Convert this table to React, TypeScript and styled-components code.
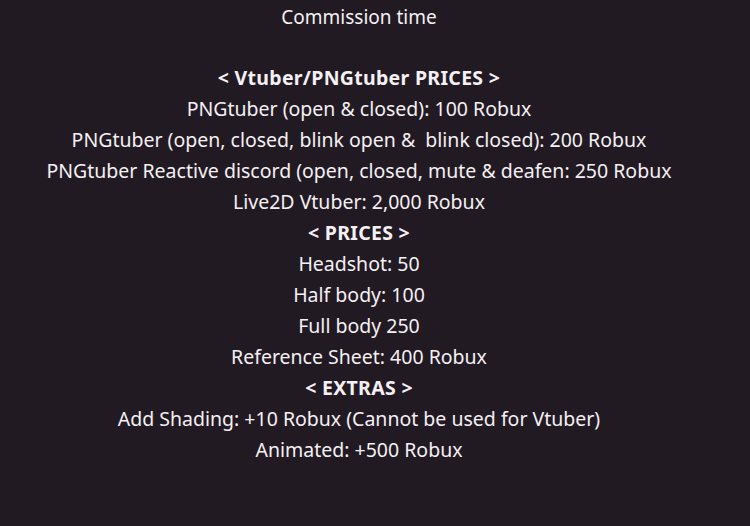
import React, { FC } from 'react';
import styled, { createGlobalStyle } from 'styled-components';

const GlobalStyle = createGlobalStyle`
    html, body {
        margin: 0;
        padding: 0;
        background: #221a22;
    }
`;

type Line = { text: string; heading?: boolean };

const sections: Line[][] = [
    [
        { text: '< Vtuber/PNGtuber PRICES >', heading: true },
        { text: 'PNGtuber (open & closed): 100 Robux' },
        { text: 'PNGtuber (open, closed, blink open &\u00a0 blink closed): 200 Robux' },
        { text: 'PNGtuber Reactive discord (open, closed, mute & deafen: 250 Robux' },
        { text: 'Live2D Vtuber: 2,000 Robux' },
    ],
    [
        { text: '< PRICES >', heading: true },
        { text: 'Headshot: 50' },
        { text: 'Half body: 100' },
        { text: 'Full body 250' },
        { text: 'Reference Sheet: 400 Robux' },
    ],
    [
        { text: '< EXTRAS >', heading: true },
        { text: 'Add Shading: +10 Robux (Cannot be used for Vtuber)' },
        { text: 'Animated: +500 Robux' },
    ],
];

const App: FC = () => (
    <>
        <GlobalStyle />
        <Page>
            <Title>Commission time</Title>
            <Spacer />
            {sections.map((section, i) => (
                <Section key={i}>
                    {section.map(line => (
                        <Row key={line.text} heading={line.heading}>
                            {line.text}
                        </Row>
                    ))}
                </Section>
            ))}
        </Page>
    </>
);

export default App;

const Page = styled.main`
    width: 750px;
    height: 526px;
    box-sizing: border-box;
    padding: 2px 32px 0 0;
    display: flex;
    flex-direction: column;
    align-items: center;
    background: #221a22;
    color: #f4f0f4;
    font-family: 'Noto Sans', 'Open Sans', sans-serif;
    font-size: 19.5px;
    line-height: 31px;
    text-align: center;
`;

const Title = styled.div`
    font-weight: 400;
    font-size: 19px;
`;

const Spacer = styled.div`
    height: 29px;
`;

const Section = styled.section`
    display: flex;
    flex-direction: column;
    align-items: center;
`;

const Row = styled.div.withConfig({ shouldForwardProp: p => p !== 'heading' })<{ heading?: boolean }>`
    font-weight: ${p => (p.heading ? 700 : 400)};
    letter-spacing: ${p => (p.heading ? '0.3px' : '0')};
    white-space: pre;
`;
